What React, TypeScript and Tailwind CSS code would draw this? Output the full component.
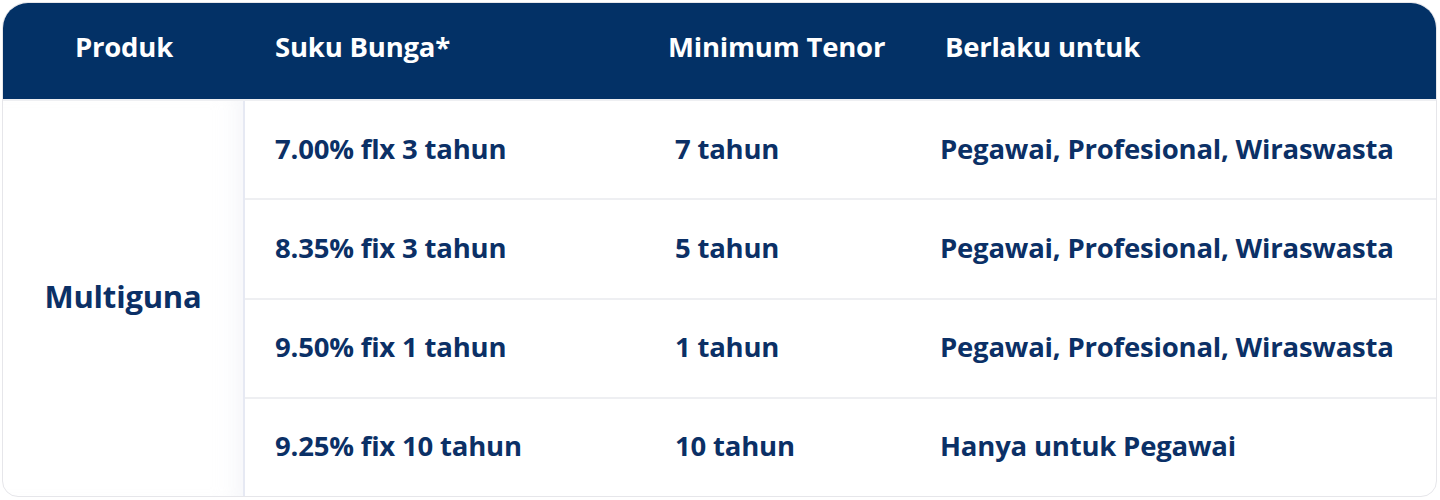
import React from "react";

const rows = [
  { rate: "7.00% flx 3 tahun", tenor: "7 tahun", who: "Pegawai, Profesional, Wiraswasta" },
  { rate: "8.35% fix 3 tahun", tenor: "5 tahun", who: "Pegawai, Profesional, Wiraswasta" },
  { rate: "9.50% fix 1 tahun", tenor: "1 tahun", who: "Pegawai, Profesional, Wiraswasta" },
  { rate: "9.25% fix 10 tahun", tenor: "10 tahun", who: "Hanya untuk Pegawai" },
];

export default function App() {
  return (
    <div
      className="w-[1440px] h-[500px] bg-white p-[2px] pr-[3px] pb-[3px]"
      style={{ fontFamily: '"Open Sans", "Noto Sans", sans-serif' }}
    >
      <div className="h-full flex flex-col rounded-t-[26px] rounded-b-[16px] border border-[#e6e6ea] overflow-hidden">
        <div className="h-[96px] shrink-0 bg-[#033166] flex items-center pb-[8px] text-white text-[27.5px] font-bold tracking-[-0.2px]">
          <div className="w-[242px] text-center">Produk</div>
          <div className="w-[401px] pl-[30px]">Suku Bunga*</div>
          <div className="w-[266px] pl-[22px]">Minimum Tenor</div>
          <div className="flex-1 pl-[33px]">Berlaku untuk</div>
        </div>
        <div className="flex-1 flex border-t-2 border-[#eeeff2] text-[#0b3066] text-[27.5px] font-bold tracking-[-0.2px]">
          <div className="w-[242px] shrink-0 flex items-center justify-center pb-[4px] border-r-2 border-[#e6e9f3] shadow-[inset_-24px_0_24px_-20px_rgba(220,224,236,0.35)] text-[31px]">
            Multiguna
          </div>
          <div className="flex-1 flex flex-col">
            {rows.map((r, i) => (
              <div
                key={i}
                className={`flex-1 flex items-center pb-[3px] ${i < rows.length - 1 ? "border-b-2 border-[#eeeff2]" : ""}`}
              >
                <div className="w-[400px] pl-[30px]">{r.rate}</div>
                <div className="w-[266px] pl-[30px]">{r.tenor}</div>
                <div className="flex-1 pl-[29px]">{r.who}</div>
              </div>
            ))}
          </div>
        </div>
      </div>
    </div>
  );
}
